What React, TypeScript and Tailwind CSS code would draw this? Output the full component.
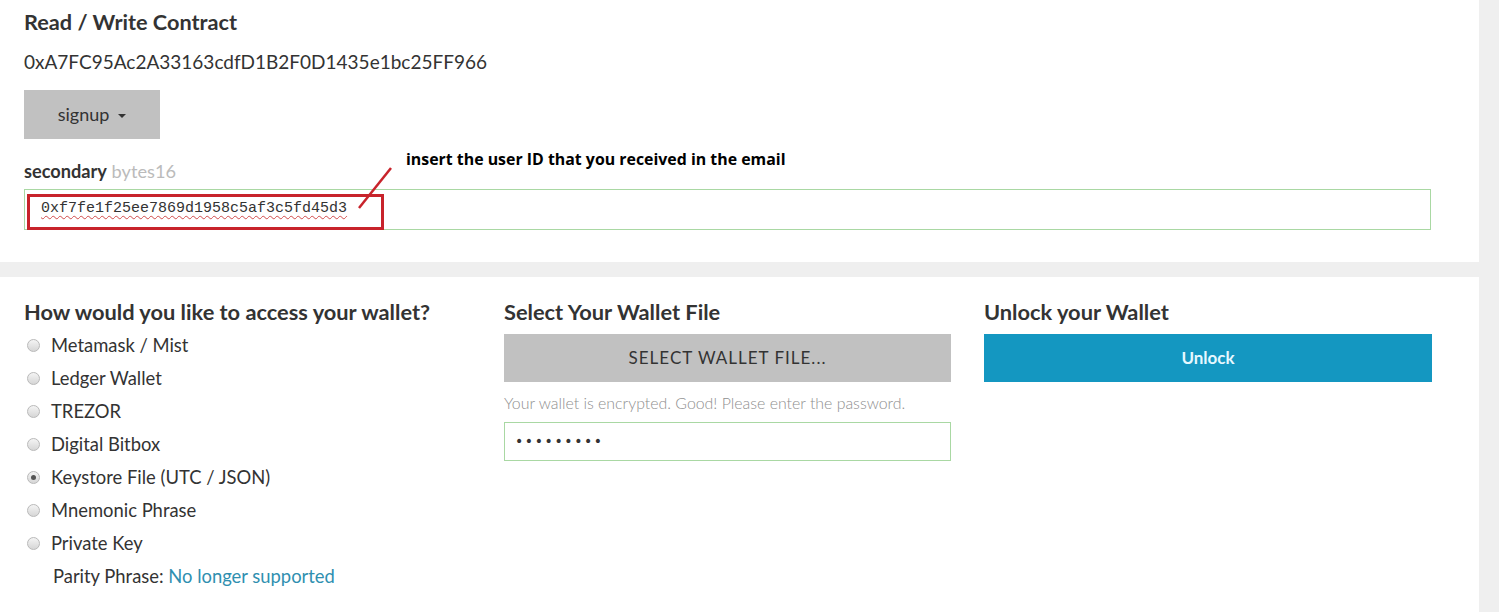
import React from "react";

const methods = [
  { label: "Metamask / Mist", checked: false },
  { label: "Ledger Wallet", checked: false },
  { label: "TREZOR", checked: false },
  { label: "Digital Bitbox", checked: false },
  { label: "Keystore File (UTC / JSON)", checked: true },
  { label: "Mnemonic Phrase", checked: false },
  { label: "Private Key", checked: false },
];

function Radio({ checked }: { checked: boolean }) {
  return (
    <span className="flex h-[13px] w-[13px] items-center justify-center rounded-full border border-[#b9b9b9] bg-gradient-to-b from-[#f4f4f4] to-[#d6d6d6]">
      {checked && <span className="h-[5px] w-[5px] rounded-full bg-[#555]" />}
    </span>
  );
}

export default function App() {
  return (
    <div className="flex min-h-[612px] w-[1499px] bg-[#efefef] font-['Lato','Open_Sans',sans-serif] text-[#333]">
      <div className="flex w-[1479px] flex-col gap-[15px]">
        {/* Contract panel */}
        <div className="bg-white px-6 pt-[8px] pb-[32px]">
          <h2 className="text-[21.7px] font-bold leading-[28px]">Read / Write Contract</h2>
          <p className="mt-[14px] text-[19px] leading-[24px]">0xA7FC95Ac2A33163cdfD1B2F0D1435e1bc25FF966</p>
          <button className="mt-[16px] flex h-[49px] w-[136px] items-center justify-center gap-[9px] bg-[#c1c1c1] text-[18px] text-[#333]">
            signup
            <span className="mt-[2px] h-0 w-0 border-x-[4px] border-t-[4px] border-x-transparent border-t-[#333]" />
          </button>
          <div className="relative mt-[20px]">
            <p className="text-[18.2px] leading-[24px]">
              <span className="font-bold">secondary</span> <span className="text-[#bbb]">bytes16</span>
            </p>
            <span className="absolute left-[382px] top-[-11px] font-['Open_Sans',sans-serif] text-[15.9px] font-bold text-black">
              insert the user ID that you received in the email
            </span>
            <div className="relative mt-[6px] flex h-[41px] w-[1407px] items-center border border-[#a9d8a3] px-[16px]">
              <span className="font-['Liberation_Mono',monospace] text-[15px] text-[#333] underline decoration-[#d04a4a] decoration-wavy decoration-1 underline-offset-[3px]">
                0xf7fe1f25ee7869d1958c5af3c5fd45d3
              </span>
              <span className="pointer-events-none absolute left-[2px] top-[4px] h-[36px] w-[357px] border-[3px] border-[#c8232b]" />
              <svg className="pointer-events-none absolute left-[330px] top-[-26px]" width="40" height="48" viewBox="0 0 40 48">
                <line x1="4" y1="44" x2="36" y2="4" stroke="#c8232b" strokeWidth="2.5" />
              </svg>
            </div>
          </div>
        </div>

        {/* Wallet panel */}
        <div className="flex-1 bg-white px-6 pt-[22px]">
          <div className="grid grid-cols-[447px_447px_448px] gap-x-[33px]">
            <div>
              <h3 className="text-[21.8px] font-bold leading-[26px]">How would you like to access your wallet?</h3>
              <ul className="mt-[4px]">
                {methods.map((m) => (
                  <li key={m.label} className="flex h-[33px] items-center gap-[11px] pl-[3px] text-[18.4px]">
                    <Radio checked={m.checked} />
                    <span>{m.label}</span>
                  </li>
                ))}
              </ul>
              <p className="flex h-[33px] items-center pl-[29px] text-[18.4px]">
                Parity Phrase:&nbsp;<span className="text-[#2f8fb0]">No longer supported</span>
              </p>
            </div>

            <div>
              <h3 className="text-[21.8px] font-bold leading-[26px]">Select Your Wallet File</h3>
              <button className="mt-[9px] flex h-[48px] w-full items-center justify-center bg-[#c1c1c1] text-[17px] tracking-[1px] text-[#333]">
                SELECT WALLET FILE...
              </button>
              <p className="mt-[10px] text-[15.9px] font-light leading-[22px] text-[#8f8f8f]">
                Your wallet is encrypted. Good! Please enter the password.
              </p>
              <div className="mt-[8px] flex h-[39px] items-center border border-[#a9d8a3] px-[10px] font-['DejaVu_Sans',sans-serif] text-[14px] tracking-[1.6px] text-[#333]">
                •••••••••
              </div>
            </div>

            <div>
              <h3 className="text-[21.8px] font-bold leading-[26px]">Unlock your Wallet</h3>
              <button className="mt-[9px] flex h-[48px] w-full items-center justify-center bg-[#1497c1] text-[17px] font-bold text-[#e6f8ff]">
                Unlock
              </button>
            </div>
          </div>
        </div>
      </div>
    </div>
  );
}
